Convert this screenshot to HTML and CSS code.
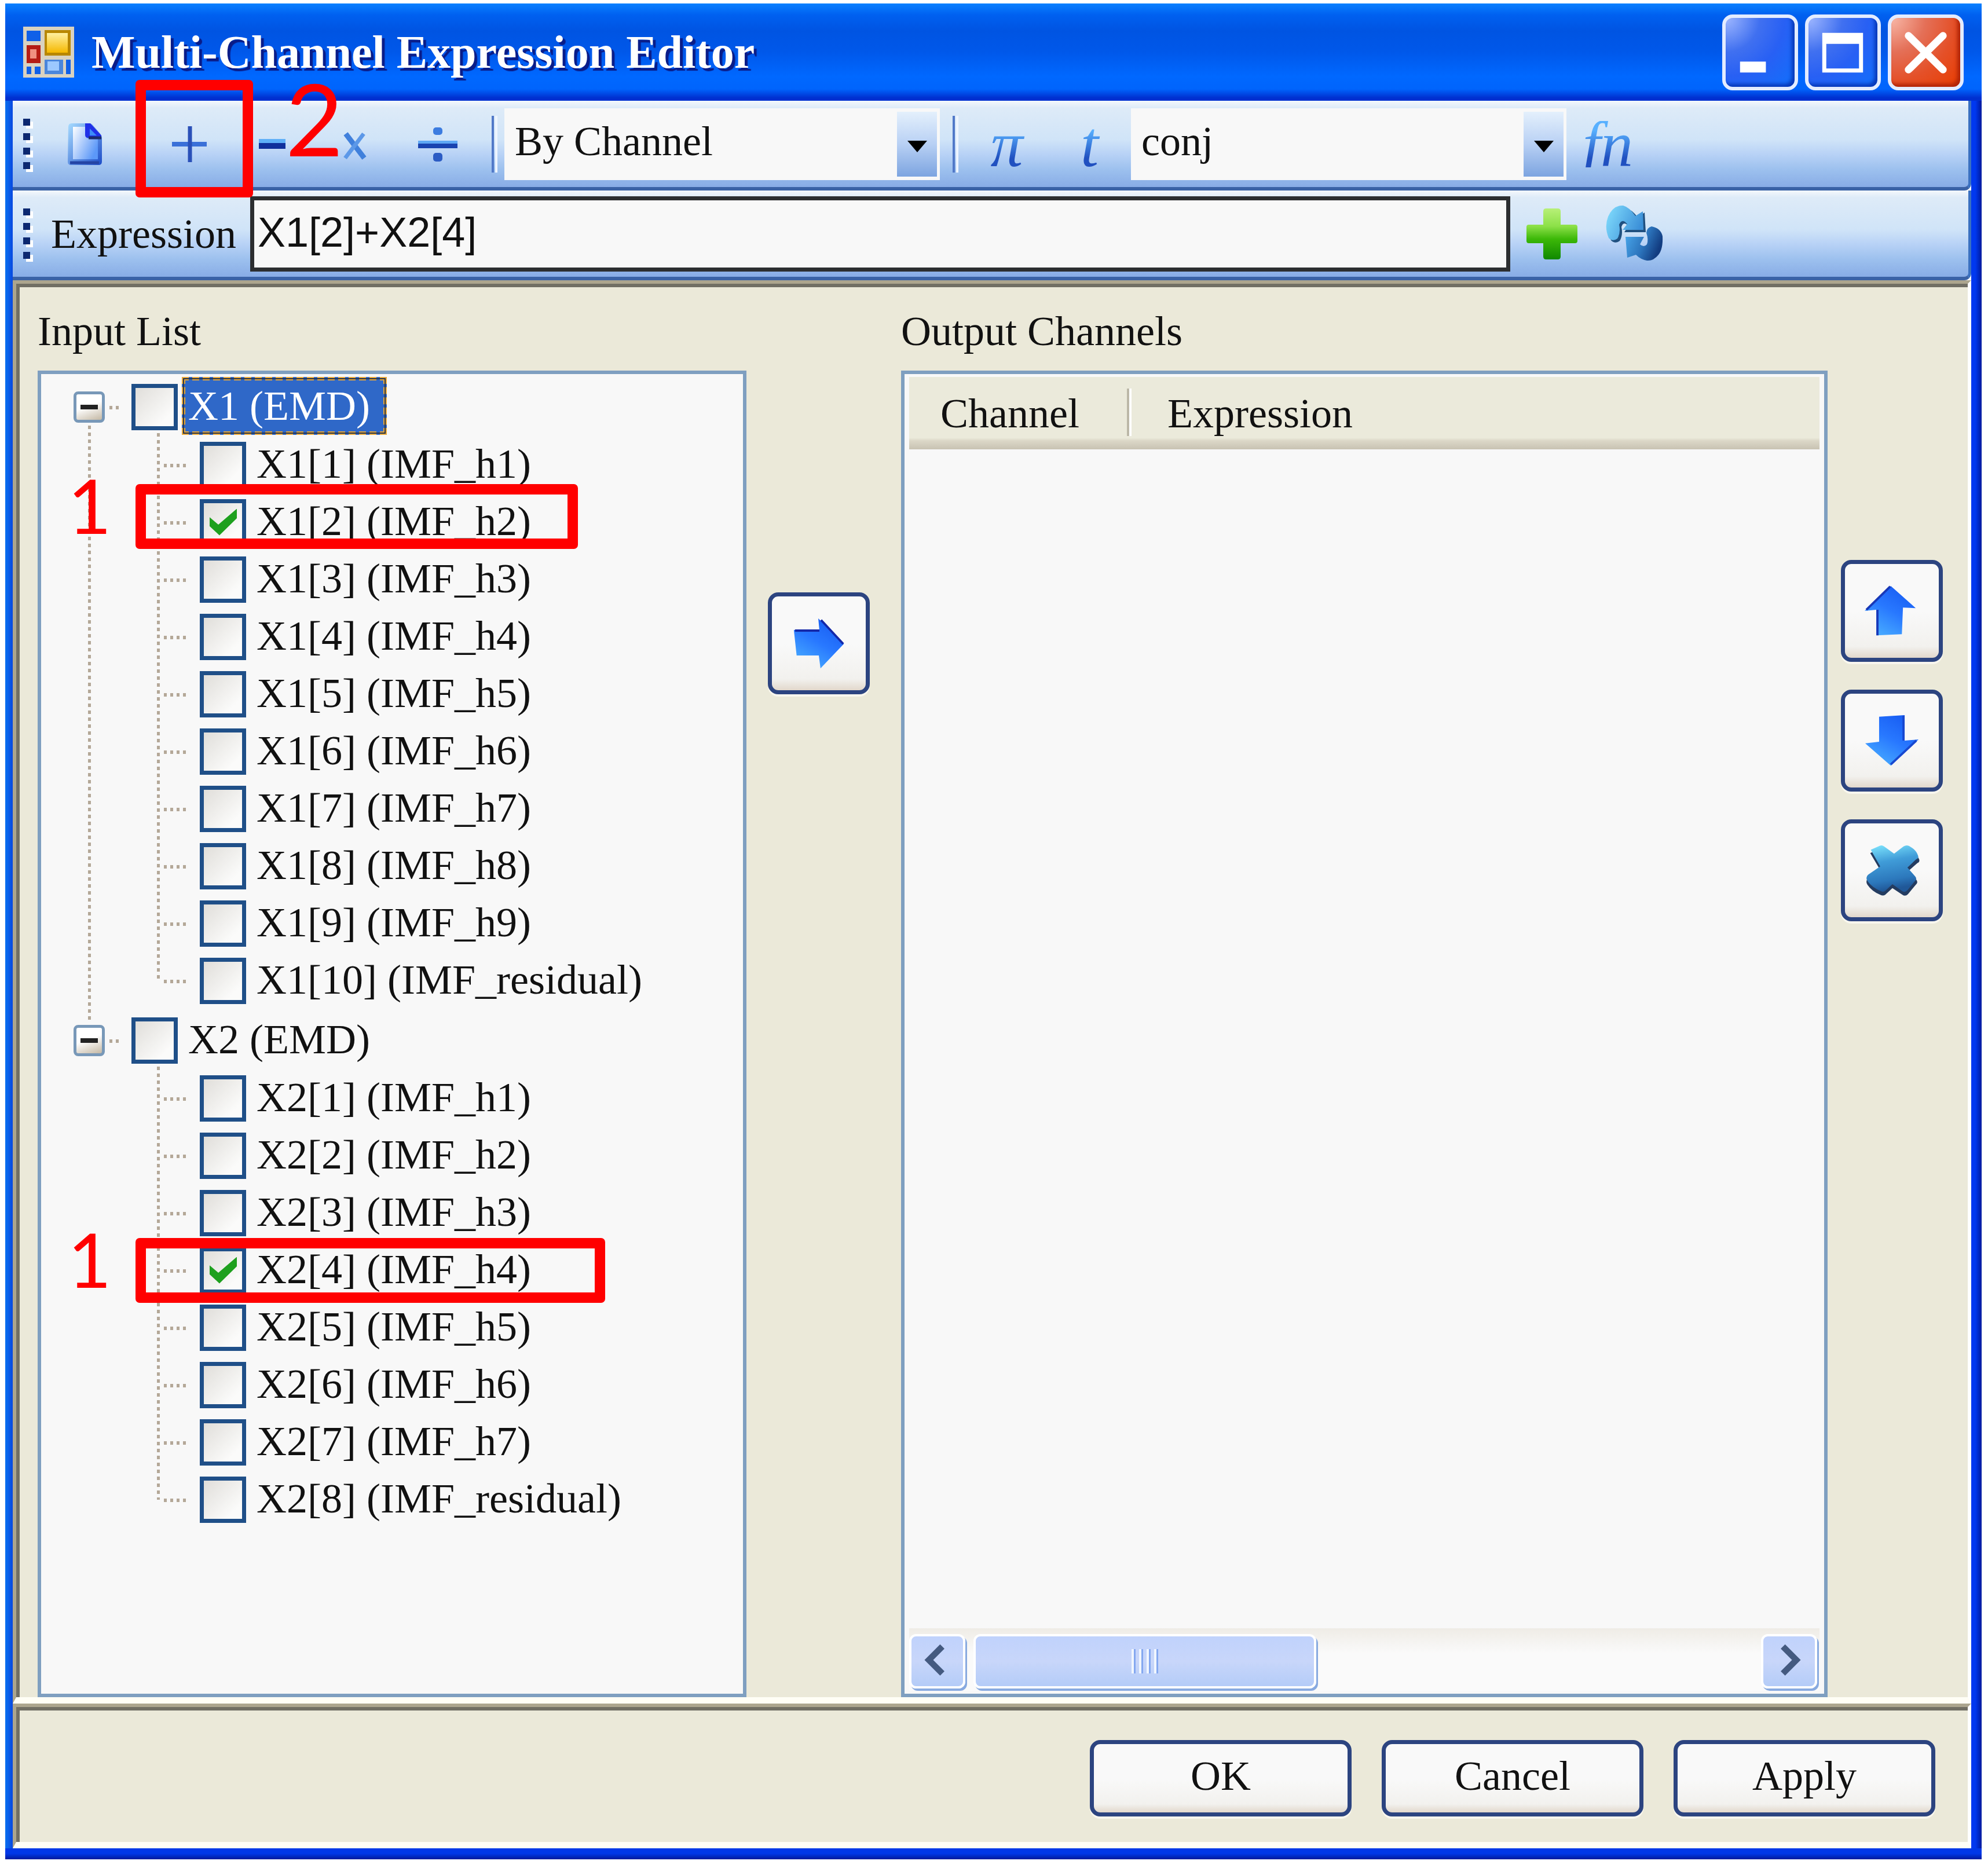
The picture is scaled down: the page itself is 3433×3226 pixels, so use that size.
FILE: index.html
```html
<!DOCTYPE html>
<html lang="en">

<head>
    <meta charset="UTF-8">
    <meta name="viewport" content="width=device-width, initial-scale=1.0">
    <title>Multi-Channel Expression Editor</title>
    <link rel="stylesheet" href="styles.css">
</head>

<body>
    <div class="window">
        <header class="titlebar">
            <svg class="app-icon" viewBox="0 0 88 88">
                <defs>
                    <linearGradient id="gold" x1="0" y1="0" x2="0" y2="1">
                        <stop offset="0" stop-color="#fff0a0" />
                        <stop offset="1" stop-color="#f5b800" />
                    </linearGradient>
                </defs>
                <rect width="88" height="88" fill="#d9d2c0" />
                <rect x="6" y="7" width="24" height="18" fill="#1060e8" />
                <rect x="6" y="32" width="24" height="31" fill="#b51c14" />
                <rect x="12" y="39" width="11" height="16" fill="#f09080" />
                <rect x="37" y="6" width="45" height="44" fill="#b88700" />
                <rect x="41" y="11" width="36" height="34" fill="url(#gold)" />
                <rect x="6" y="69" width="8" height="13" fill="#1060e8" />
                <rect x="20" y="69" width="10" height="13" fill="#1060e8" />
                <rect x="37" y="57" width="32" height="25" fill="#4a86dc" />
                <rect x="42" y="60" width="20" height="16" fill="#9cc8ff" />
                <rect x="74" y="57" width="8" height="25" fill="#1060e8" />
            </svg>
            <h1>Multi-Channel Expression Editor</h1>
            <div class="window-buttons">
                <button type="button" aria-label="Minimize">
                    <svg viewBox="0 0 120 120"><rect x="25" y="76" width="45" height="19" fill="#fff" /></svg>
                </button>
                <button type="button" aria-label="Maximize">
                    <svg viewBox="0 0 120 120"><path d="M24 26h71v69H24zM31 45v43h57V45z" fill="#fff" fill-rule="evenodd" /></svg>
                </button>
                <button type="button" class="close" aria-label="Close">
                    <svg viewBox="0 0 120 120"><path d="M30 31l60 59M90 31L30 90" stroke="#fff" stroke-width="13" stroke-linecap="round" /></svg>
                </button>
            </div>
        </header>

        <div class="toolbar">
            <span class="grip"><i></i><i></i><i></i><i></i></span>
            <button type="button" class="tool new" aria-label="New">
                <svg viewBox="0 0 64 80">
                    <defs>
                        <linearGradient id="page" x1="0" y1="0" x2="1" y2="1">
                            <stop offset="0" stop-color="#a8dcff" />
                            <stop offset="1" stop-color="#1c4cc8" />
                        </linearGradient>
                        <linearGradient id="sheet" x1="0" y1="0" x2="1" y2=".6">
                            <stop offset="0" stop-color="#fff" />
                            <stop offset="1" stop-color="#5c98f8" />
                        </linearGradient>
                    </defs>
                    <path d="M2 10q0-6 6-6h30q4 0 7 4l12 14q3 3 3 7v41q0 6-6 6H7q-6 0-6-6z" fill="url(#page)" />
                    <path d="M10 10h24v20h19v36H10z" fill="url(#sheet)" />
                    <path d="M5 72h50" stroke="#2444a4" stroke-width="5" />
                    <path d="M31 4h9l19 21v4H36q-5 0-5-5z" fill="#2030e8" />
                    <path d="M39 13l12 12H39z" fill="#3c8cf8" />
                    <path d="M37 29h22" stroke="#1c2c6c" stroke-width="5" />
                </svg>
            </button>
            <div class="tool-wrap">
                <button type="button" class="tool" aria-label="Add">
                    <svg viewBox="0 0 64 64"><path d="M2 32h60" stroke="#3a70d8" stroke-width="8" /><path d="M33 1v62" stroke="#2a50b8" stroke-width="7" /></svg>
                </button>
                <span class="mark mark-tool"></span>
                <span class="step step-two">2</span>
            </div>
            <button type="button" class="tool" aria-label="Subtract">
                <svg viewBox="0 0 64 64"><path d="M9 27h46" stroke="#5fb0f8" stroke-width="8" /><path d="M9 35h46" stroke="#10309c" stroke-width="10" /></svg>
            </button>
            <button type="button" class="tool" aria-label="Multiply">
                <svg viewBox="0 0 64 64"><path d="M16 14l32 42" stroke="#4080dc" stroke-width="9" /><path d="M47 14L15 56" stroke="#5c98e8" stroke-width="7" /></svg>
            </button>
            <button type="button" class="tool" aria-label="Divide">
                <svg class="divide" viewBox="0 0 68 64">
                    <path d="M0 29h68" stroke="#5fa8f4" stroke-width="6" /><path d="M0 35h68" stroke="#1a44b0" stroke-width="8" />
                    <rect x="26" y="3" width="16" height="13" rx="5" fill="#3c7ce0" />
                    <rect x="26" y="47" width="16" height="15" rx="5" fill="#2c5cc4" />
                </svg>
            </button>
            <span class="separator"></span>
            <div class="combo">
                <select aria-label="Mode"><option>By Channel</option></select>
                <span class="arrow"></span>
            </div>
            <span class="separator"></span>
            <button type="button" class="tool symbol"><span>π</span></button>
            <button type="button" class="tool symbol"><span>t</span></button>
            <div class="combo">
                <select aria-label="Function"><option>conj</option></select>
                <span class="arrow"></span>
            </div>
            <button type="button" class="tool symbol"><span>fn</span></button>
        </div>

        <div class="toolbar">
            <span class="grip"><i></i><i></i><i></i><i></i></span>
            <label class="expression-label" for="expression">Expression</label>
            <input type="text" class="expression" id="expression" value="X1[2]+X2[4]">
            <button type="button" class="tool" aria-label="Add expression">
                <svg class="big" viewBox="0 0 92 92">
                    <defs>
                        <linearGradient id="green" x1="0" y1="0" x2="0" y2="1">
                            <stop offset="0" stop-color="#b8f078" />
                            <stop offset=".35" stop-color="#8ce048" />
                            <stop offset=".6" stop-color="#3cb808" />
                            <stop offset="1" stop-color="#108800" />
                        </linearGradient>
                    </defs>
                    <path d="M36 2h20q5 0 5 5v23h25q4 0 4 4v24q0 4-4 4H61v23q0 5-5 5H36q-5 0-5-5V62H6q-4 0-4-4V34q0-4 4-4h25V7q0-5 5-5z" fill="url(#green)" />
                </svg>
            </button>
            <button type="button" class="tool" aria-label="Refresh">
                <svg class="refresh" viewBox="0 0 100 100">
                    <defs>
                        <linearGradient id="swirl-top" x1="0" y1="0" x2="1" y2=".4">
                            <stop offset="0" stop-color="#84e0ff" />
                            <stop offset="1" stop-color="#3c90d8" />
                        </linearGradient>
                        <linearGradient id="swirl-bottom" x1="0" y1="0" x2="1" y2=".4">
                            <stop offset="0" stop-color="#4cacf0" />
                            <stop offset=".6" stop-color="#2c74bc" />
                            <stop offset="1" stop-color="#123c80" />
                        </linearGradient>
                    </defs>
                    <path d="M7 59Q-1 40 6 22Q15 1 32 3Q43 6 53 19L65 11L67 45L30 45L37 34Q28 25 25 36Q28 50 22 60Q14 66 7 59z" fill="#205080" transform="translate(2 2)" />
                    <path d="M5 57Q-3 38 4 20Q13 0 30 1Q41 4 51 19L64 11L65 43L29 43L37 33Q28 22 23 34Q26 48 20 58Q12 64 5 57z" fill="url(#swirl-top)" />
                    <path d="M79 37Q95 40 98 54Q99 76 91 86Q82 97 71 96Q60 94 52 86L37 91L34 55L66 55L59 68Q66 74 71 68Q74 60 70 48Q71 39 79 37z" fill="url(#swirl-bottom)" />
                </svg>
            </button>
        </div>

        <main class="panel">
            <section class="input-side">
                <h2>Input List</h2>
                <ul class="tree">
                    <li class="group">
                        <div class="row root">
                            <button type="button" class="expander" aria-label="Collapse X1"></button>
                            <input type="checkbox" id="x1"><label for="x1" class="selected">X1 (EMD)</label>
                        </div>
                        <ul>
                            <li class="row"><input type="checkbox" id="x1-1"><label for="x1-1">X1[1] (IMF_h1)</label></li>
                            <li class="row">
                                <input type="checkbox" id="x1-2" checked><label for="x1-2">X1[2] (IMF_h2)</label>
                                <span class="mark mark-row"></span>
                                <span class="step">1</span>
                            </li>
                            <li class="row"><input type="checkbox" id="x1-3"><label for="x1-3">X1[3] (IMF_h3)</label></li>
                            <li class="row"><input type="checkbox" id="x1-4"><label for="x1-4">X1[4] (IMF_h4)</label></li>
                            <li class="row"><input type="checkbox" id="x1-5"><label for="x1-5">X1[5] (IMF_h5)</label></li>
                            <li class="row"><input type="checkbox" id="x1-6"><label for="x1-6">X1[6] (IMF_h6)</label></li>
                            <li class="row"><input type="checkbox" id="x1-7"><label for="x1-7">X1[7] (IMF_h7)</label></li>
                            <li class="row"><input type="checkbox" id="x1-8"><label for="x1-8">X1[8] (IMF_h8)</label></li>
                            <li class="row"><input type="checkbox" id="x1-9"><label for="x1-9">X1[9] (IMF_h9)</label></li>
                            <li class="row"><input type="checkbox" id="x1-10"><label for="x1-10">X1[10] (IMF_residual)</label></li>
                        </ul>
                    </li>
                    <li class="group">
                        <div class="row root">
                            <button type="button" class="expander" aria-label="Collapse X2"></button>
                            <input type="checkbox" id="x2"><label for="x2">X2 (EMD)</label>
                        </div>
                        <ul>
                            <li class="row"><input type="checkbox" id="x2-1"><label for="x2-1">X2[1] (IMF_h1)</label></li>
                            <li class="row"><input type="checkbox" id="x2-2"><label for="x2-2">X2[2] (IMF_h2)</label></li>
                            <li class="row"><input type="checkbox" id="x2-3"><label for="x2-3">X2[3] (IMF_h3)</label></li>
                            <li class="row">
                                <input type="checkbox" id="x2-4" checked><label for="x2-4">X2[4] (IMF_h4)</label>
                                <span class="mark mark-row wide"></span>
                                <span class="step low">1</span>
                            </li>
                            <li class="row"><input type="checkbox" id="x2-5"><label for="x2-5">X2[5] (IMF_h5)</label></li>
                            <li class="row"><input type="checkbox" id="x2-6"><label for="x2-6">X2[6] (IMF_h6)</label></li>
                            <li class="row"><input type="checkbox" id="x2-7"><label for="x2-7">X2[7] (IMF_h7)</label></li>
                            <li class="row"><input type="checkbox" id="x2-8"><label for="x2-8">X2[8] (IMF_residual)</label></li>
                        </ul>
                    </li>
                </ul>
            </section>

            <div class="move">
                <button type="button" class="icon-button" aria-label="Move to output">
                    <svg viewBox="0 0 96 96">
                        <defs>
                            <linearGradient id="blue" x1="0" y1="1" x2=".6" y2="0">
                                <stop offset="0" stop-color="#50b8ff" />
                                <stop offset=".6" stop-color="#2878ff" />
                                <stop offset="1" stop-color="#1a60f4" />
                            </linearGradient>
                        </defs>
                        <path d="M3 24h46L47 3l46 46-42 44-3-23H8z" fill="url(#blue)" />
                        <path d="M5 25h44M52 6l40 43" stroke="#1428a8" stroke-width="4" fill="none" />
                    </svg>
                </button>
            </div>

            <section class="output-side">
                <h2>Output Channels</h2>
                <div class="output">
                    <table>
                        <thead>
                            <tr>
                                <th class="channel">Channel</th>
                                <th>Expression</th>
                            </tr>
                        </thead>
                        <tbody></tbody>
                    </table>
                    <div class="scrollbar">
                        <button type="button" aria-label="Scroll left">
                            <svg viewBox="0 0 92 80"><path d="M55 14L31 38l24 24" /></svg>
                        </button>
                        <div class="track">
                            <div class="thumb"><i></i><i></i><i></i><i></i></div>
                        </div>
                        <button type="button" aria-label="Scroll right">
                            <svg viewBox="0 0 92 80"><path d="M35 14l24 24-24 24" /></svg>
                        </button>
                    </div>
                </div>
            </section>

            <div class="order">
                <button type="button" class="icon-button" aria-label="Move up">
                    <svg viewBox="0 0 96 96">
                        <path d="M46 3l45 40-23-1-2 48-46 2V46L-1 48z" fill="url(#blue)" />
                        <path d="M45 4L2 46M22 46v46" stroke="#1838b8" stroke-width="4" fill="none" />
                    </svg>
                </button>
                <button type="button" class="icon-button" aria-label="Move down">
                    <svg viewBox="0 0 96 96">
                        <path d="M25 5l46-3v46l25-2-50 47L0 53l25-3z" fill="url(#blue)" />
                        <path d="M69 3v45M92 48L46 91" stroke="#1848d0" stroke-width="4" fill="none" />
                    </svg>
                </button>
                <button type="button" class="icon-button" aria-label="Delete">
                    <svg viewBox="0 0 96 96">
                        <defs>
                            <linearGradient id="cross" x1="0" y1="0" x2=".2" y2="1">
                                <stop offset="0" stop-color="#80e8ff" />
                                <stop offset=".4" stop-color="#409cd8" />
                                <stop offset=".8" stop-color="#2c78bc" />
                                <stop offset="1" stop-color="#205898" />
                            </linearGradient>
                        </defs>
                        <path d="M9 14l17-8q4-2 8 1l18 13 17-13q7-4 13 1 10 6 15 17 2 5-3 7L78 46l14 16q4 5-1 9L77 88q-5 5-10 1L49 77 36 89q-4 3-9 0Q12 83 4 71q-4-6 1-12l21-16z" fill="#243c60" transform="translate(0 3)" />
                        <path d="M10 11l16-7q4-2 8 1l18 13 17-13q7-4 13 1 10 6 13 15 2 5-3 7L76 43l14 16q4 5-1 9L76 84q-5 5-10 1L49 73 36 85q-4 3-9 0Q12 79 4 67q-4-6 1-11l22-15z" fill="url(#cross)" />
                    </svg>
                </button>
            </div>
        </main>

        <footer class="panel footer">
            <button type="button">OK</button>
            <button type="button">Cancel</button>
            <button type="button">Apply</button>
        </footer>
    </div>
</body>

</html>
```

FILE: styles.css
```css
* {
    box-sizing: border-box;
}

body {
    margin: 0;
    padding: 6px 11px 15px 9px;
    min-height: 100vh;
    display: flex;
    background: #fff;
    color: #111;
    font-family: "Liberation Serif", serif;
    font-size: 72px;
    line-height: 80px;
}

h1,
h2,
ul {
    margin: 0;
    padding: 0;
    font-weight: normal;
    list-style: none;
}

button,
input,
select {
    margin: 0;
    padding: 0;
    font: inherit;
    color: inherit;
}

svg {
    display: block;
    overflow: visible;
}

.window {
    flex: 1;
    display: flex;
    flex-direction: column;
    padding: 0 18px 19px 13px;
    background:
        linear-gradient(to bottom, #0038e8 0 9px, #001a9c) bottom / 100% 19px no-repeat,
        linear-gradient(to right, #0038f0 0 7px, #001a9c) right / 18px 100% no-repeat,
        linear-gradient(to right, #0a70f0, #0848e0) left / 13px 100% no-repeat;
}

/* title bar */
.titlebar {
    display: flex;
    align-items: center;
    height: 168px;
    margin: 0 -18px 0 -13px;
    padding: 0 31px;
    background: linear-gradient(#0a80ff, #0060f0 12%, #0054e2 28%, #0058ea 50%, #0068ff 75%, #0064fc 88%, #0030d0 97%);
}

.titlebar h1 {
    flex: 1;
    margin-left: 30px;
    color: #fff;
    font-size: 80px;
    font-weight: bold;
    text-shadow: 5px 5px 1px #0a1c88;
}

.app-icon {
    width: 88px;
    height: 88px;
}

.window-buttons {
    display: flex;
    gap: 12px;
}

.window-buttons button {
    width: 131px;
    height: 131px;
    border: 6px solid #e4ecff;
    border-radius: 18px;
    background: radial-gradient(circle at 0 0, #a0b8ff, #4070f0 35%, #2860f4 60%, #1070fc);
    box-shadow: inset -5px -5px 6px #0838b8;
}

.window-buttons .close {
    background: radial-gradient(circle at 0 0, #f8b8a8, #e47058 35%, #e45028 65%, #e83c00);
    box-shadow: inset -5px -5px 6px #b02408;
}

/* toolbars */
.toolbar {
    display: flex;
    align-items: center;
    height: 155px;
    padding-left: 18px;
    border-bottom: 6px solid #3a62a6;
    border-right: 5px solid #3a70c0;
    border-bottom-right-radius: 12px;
    background: linear-gradient(#f4f8fc, #deebf8 8%, #d0e4f8 45%, #b8d2f6 62%, #9cc0ee 80%, #88ace6);
}

.grip {
    display: flex;
    flex-direction: column;
    gap: 13px;
    width: 19px;
}

.grip i {
    width: 12px;
    height: 12px;
    background: #0c2870;
    box-shadow: 5px 5px 0 #fff;
}

.tool {
    display: flex;
    align-items: center;
    justify-content: center;
    width: 143px;
    height: 124px;
    border: none;
    background: none;
}

.tool svg {
    width: 64px;
    height: 64px;
}

.new {
    margin: 0 36px 0 17px;
}

.tool.new svg {
    height: 80px;
}

.tool svg.divide {
    width: 68px;
}

.tool svg.big {
    width: 92px;
    height: 92px;
}

.tool svg.refresh {
    width: 100px;
    height: 100px;
}

.tool-wrap {
    position: relative;
}

.symbol {
    font-size: 112px;
    font-style: italic;
}

.symbol span {
    padding: 0 8px;
    background: linear-gradient(#58b0ff 20%, #2050c0 80%);
    -webkit-background-clip: text;
    background-clip: text;
    color: transparent;
}

.separator {
    width: 10px;
    height: 98px;
    margin: 0 12px 0 22px;
    border-left: 4px solid #5078c8;
    border-right: 4px solid #eef5ff;
}

.combo {
    position: relative;
    width: 752px;
    height: 124px;
}

.combo select {
    width: 100%;
    height: 100%;
    padding: 0 90px 10px 18px;
    border: none;
    border-radius: 0;
    background: #f8f8f8;
    appearance: none;
}

.arrow {
    position: absolute;
    top: 6px;
    right: 5px;
    bottom: 6px;
    width: 69px;
    background: linear-gradient(#e4f0fc, #b8d0f4 50%, #7ca4e0);
    pointer-events: none;
}

.arrow::after {
    content: "";
    position: absolute;
    left: 18px;
    top: 50px;
    border: 17px solid transparent;
    border-top: 20px solid #000;
    border-bottom: none;
}

.expression-label {
    width: 344px;
    margin-left: 29px;
}

.expression {
    flex: 0 1 2176px;
    min-width: 0;
    height: 130px;
    padding: 0 6px 6px;
    border: 7px solid #2c2e30;
    background: #f8f8f8;
    font-family: "Liberation Sans", sans-serif;
}

/* sunken panels */
.panel {
    display: flex;
    background: #ebe9d9;
    border: solid;
    border-width: 6px 6px 11px;
    border-color: #aca58e #fff #fffef6 #aca58e;
    box-shadow: inset 6px 6px 0 #716f64;
}

main.panel {
    flex: 1;
    padding: 6px 0 0 37px;
}

.panel h2 {
    height: 144px;
    padding-top: 36px;
    font-size: 72px;
}

.input-side,
.output-side {
    display: flex;
    flex-direction: column;
    min-width: 0;
}

.input-side {
    flex: 1224;
}

.output-side {
    flex: 1600;
}

.tree,
.output {
    flex: 1;
    border: 6px solid #7f9fc0;
    background: #f8f8f8;
}

.tree {
    padding-top: 5px;
}

.group {
    position: relative;
}

.group ul {
    position: relative;
    margin: 1px 0 4px;
}

.row {
    position: relative;
    display: flex;
    align-items: center;
    height: 99px;
    padding-left: 274px;
    white-space: nowrap;
}

.row.root {
    padding-left: 56px;
}

/* dotted guide lines */
.group:first-child::before,
.group ul::before {
    content: "";
    position: absolute;
    left: 81px;
    top: 84px;
    bottom: -20px;
    width: 5px;
    background: repeating-linear-gradient(#b4a898 0 6px, transparent 6px 12px);
}

.group ul::before {
    left: 200px;
    top: -3px;
    bottom: 47px;
}

.row::before {
    content: "";
    position: absolute;
    left: 206px;
    top: 50px;
    width: 50px;
    height: 6px;
    background: repeating-linear-gradient(to right, transparent 0 6px, #b4a898 6px 11px);
}

.row.root::before {
    left: 112px;
    width: 24px;
}

.expander {
    position: relative;
    width: 54px;
    height: 54px;
    margin: 4px 46px 0 0;
    border: 5px solid #7898b8;
    border-radius: 8px;
    background: linear-gradient(160deg, #fff 45%, #c4b8a4);
}

.expander::after {
    content: "";
    position: absolute;
    left: 7px;
    top: 18px;
    width: 30px;
    height: 8px;
    background: #222;
}

.row input {
    flex: none;
    position: relative;
    width: 80px;
    height: 80px;
    margin-top: 4px;
    border: 7px solid #1f4f88;
    background: linear-gradient(135deg, #e0deda, #fbfbfa 80%);
    appearance: none;
}

.row input:checked::after {
    content: "";
    position: absolute;
    left: 10px;
    top: 10px;
    width: 47px;
    height: 46px;
    background: #1ea01e;
    clip-path: polygon(0 32%, 32% 60%, 100% 0, 100% 36%, 36% 100%, 0 66%);
}

.row label {
    height: 100px;
    margin-left: 7px;
    padding: 4px 23px 0 5px;
    border: 6px solid transparent;
}

.row .selected {
    color: #fff;
    border: 6px dashed #e8a838;
    background: #2f68c8;
    outline: 2px solid #26344c;
    outline-offset: -4px;
}

/* red tutorial marks */
.mark {
    position: absolute;
    z-index: 2;
    border: 18px solid #f00;
    border-radius: 7px;
    pointer-events: none;
}

.mark-tool {
    left: -21px;
    top: -49px;
    width: 203px;
    height: 203px;
}

.mark-row {
    left: 163px;
    top: -14px;
    width: 764px;
    height: 112px;
}

.mark-row.wide {
    top: -4px;
    width: 811px;
}

.step {
    position: absolute;
    z-index: 2;
    left: 46px;
    top: -43px;
    color: #f00;
    font-family: Lato, sans-serif;
    font-size: 130px;
    line-height: 130px;
}

.step.low {
    top: -33px;
}

.step-two {
    left: 238px;
    top: -69px;
    font-size: 172px;
    line-height: 172px;
}

/* buttons */
.icon-button,
.footer button {
    border: 7px solid #2c4480;
    border-radius: 18px;
    background: linear-gradient(#f9f9f9 50%, #f2f1ee 88%, #e2d8cc);
    box-shadow: 0 4px 0 #f8f6ee;
}

.icon-button {
    display: flex;
    align-items: center;
    justify-content: center;
    width: 176px;
    height: 176px;
}

.icon-button svg {
    width: 92px;
    height: 92px;
}

.move {
    width: 267px;
    padding: 527px 0 0 37px;
}

.order {
    display: flex;
    flex-direction: column;
    gap: 48px;
    width: 242px;
    padding: 471px 0 0 23px;
}

/* output list */
.output {
    display: flex;
    flex-direction: column;
    justify-content: space-between;
    padding: 5px 8px;
}

.output table {
    width: 100%;
    border-collapse: collapse;
}

.output thead {
    background: linear-gradient(#ebeadb 84%, #dcd8c8 88%, #c8c2b2);
}

.output th {
    height: 125px;
    padding: 0 0 0 62px;
    font-weight: normal;
    text-align: left;
}

.output .channel {
    width: 384px;
    padding-left: 54px;
    background: linear-gradient(to right, #bcb8a8 4px, #fff 4px) right 20px / 8px 82px no-repeat;
}

.scrollbar {
    display: flex;
    gap: 14px;
    height: 108px;
    padding: 10px 4px 4px 0;
    background: linear-gradient(#efece6, #fafafa 40%);
}

.scrollbar button,
.thumb {
    border: 4px solid #fff;
    border-radius: 12px;
    background: linear-gradient(#c0d2fc, #c8d6fa 50%, #b4ccf8);
    box-shadow: 3px 4px 0 #88aae0;
}

.scrollbar button {
    width: 97px;
}

.scrollbar path {
    fill: none;
    stroke: #445a80;
    stroke-width: 11px;
}

.track {
    flex: 1;
    display: flex;
}

.thumb {
    display: flex;
    align-items: center;
    justify-content: center;
    gap: 6px;
    width: 44%;
}

.thumb i {
    width: 7px;
    height: 42px;
    border-left: 4px solid #f0f6ff;
    border-right: 3px solid #84a8f0;
}

/* footer */
.footer {
    justify-content: flex-end;
    gap: 52px;
    height: 250px;
    padding: 57px 56px 0 0;
}

.footer button {
    width: 452px;
    height: 132px;
    padding-bottom: 8px;
}
```
